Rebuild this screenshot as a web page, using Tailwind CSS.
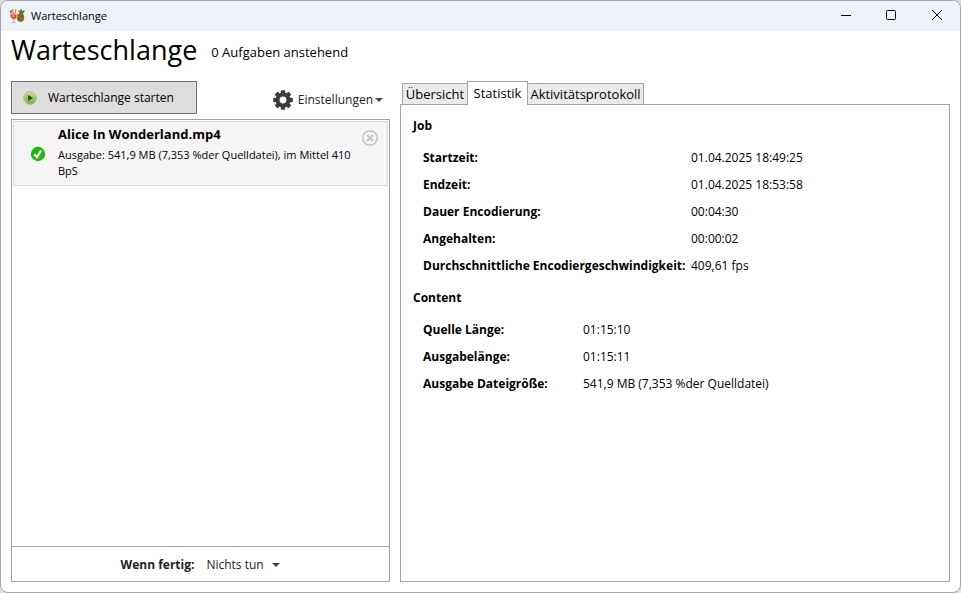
<!DOCTYPE html>
<html lang="de">
<head>
	<meta charset="utf-8">
	<title>Warteschlange</title>
	<script src="https://cdn.jsdelivr.net/npm/@tailwindcss/browser@4"></script>
</head>
<body class="h-screen bg-[#dcdcdc] text-black text-xs leading-4 font-['Open_Sans','Noto_Sans',sans-serif]">
	<div class="h-full flex flex-col bg-white border border-[#a6a6a6] rounded-lg overflow-hidden">
		<!-- Title bar -->
		<header class="h-[30px] shrink-0 flex items-center bg-[#eef3fa] pl-2">
			<svg class="w-4 h-4 mr-1.5" viewBox="0 0 16 16">
				<path d="M1 5.500h7L7 10.500Q4.500 12 2 10z" fill="#e2503f"/>
				<path d="M3.500 1l1 5M7 1L6 6" stroke="#d9604e" stroke-width="1"/>
				<path d="M4.500 11v3M3 14.500h4" stroke="#a9b4bb" stroke-width="1"/>
				<path d="M1 6h7M3 8h2" stroke="#f3c0b4" stroke-width="1"/>
				<circle cx="2" cy="3.500" r="1.500" fill="#77a06a"/>
				<path d="M11 6L9 2l2 1 1-3 1 3 3-1-2 4z" fill="#3f7d31"/>
				<ellipse cx="11.500" cy="9.500" rx="3.800" ry="4.500" fill="#9a7420"/>
				<path d="M9 7l5 5M8.500 10l3.500 3.500M14 7l-5 5M11 6l4 4" stroke="#5d4c17" stroke-width=".6"/>
			</svg>
			<span class="text-[11px]">Warteschlange</span>
			<div class="ml-auto flex h-full">
				<button type="button" aria-label="Minimieren" class="w-[45px] flex items-center justify-center">
					<svg class="w-3 h-3" viewBox="0 0 12 12" fill="none" stroke="#000"><path d="M1 5.500h10"/></svg>
				</button>
				<button type="button" aria-label="Maximieren" class="w-[45px] flex items-center justify-center">
					<svg class="w-3 h-3" viewBox="0 0 12 12" fill="none" stroke="#000"><rect x="1.500" y=".5" width="9" height="9" rx="1"/></svg>
				</button>
				<button type="button" aria-label="Schließen" class="w-[47px] flex items-center justify-center">
					<svg class="w-3 h-3" viewBox="0 0 12 12" fill="none" stroke="#000"><path d="M1 0l10 10M11 0L1 10"/></svg>
				</button>
			</div>
		</header>

		<div class="h-[42px] shrink-0 flex items-center gap-3.5 pl-2.5 pb-1">
			<h1 class="text-[27px] leading-9">Warteschlange</h1>
			<p class="text-[13px] pt-1">0 Aufgaben anstehend</p>
		</div>

		<main class="grow min-h-0 grid grid-cols-[379px_1fr] gap-2.5 px-2.5 pb-2.5 pt-2">
			<!-- Queue -->
			<section class="flex flex-col min-h-0">
				<div class="flex items-start justify-between mb-[5px]">
					<button type="button" class="w-[186px] h-[33px] flex items-center bg-[#dddddd] border border-[#707070] pl-[11px]">
						<svg class="w-3.5 h-3.5 mr-[11px]" viewBox="0 0 14 14">
							<defs>
								<linearGradient id="play" x1="0" y1="0" x2="0" y2="1">
									<stop offset="0" stop-color="#c3dba0"/>
									<stop offset="1" stop-color="#7fb03f"/>
								</linearGradient>
							</defs>
							<circle cx="7" cy="7" r="6.500" fill="url(#play)" stroke="#a9c388" stroke-width=".7"/>
							<path d="M5 4l5 3-5 3z" fill="#33481d"/>
						</svg>
						Warteschlange starten
					</button>
					<button type="button" class="flex items-center mt-[9px] mr-[7px] text-[#222]">
						<svg class="w-5 h-5 mr-[5px]" viewBox="0 0 20 20">
							<g fill="#3c3c3c">
								<rect id="tooth" x="7.800" y="0.200" width="4.400" height="19.600" rx="1"/>
								<use href="#tooth" transform="rotate(45 10 10)"/>
								<use href="#tooth" transform="rotate(90 10 10)"/>
								<use href="#tooth" transform="rotate(135 10 10)"/>
								<circle cx="10" cy="10" r="7.500"/>
							</g>
							<circle cx="10" cy="10" r="3.400" fill="#fff"/>
						</svg>
						Einstellungen
						<svg class="w-2 h-1 ml-0.5" viewBox="0 0 8 4"><path d="M0 0h8L4 4z" fill="#444"/></svg>
					</button>
				</div>
				<div class="grow min-h-0 flex flex-col border border-[#a3a3a3]">
					<ul class="grow p-px">
						<li class="flex items-start h-[65px] bg-[#f5f5f5] border border-[#dadada] pl-4 pr-2">
							<svg class="shrink-0 w-4 h-4 mt-6 mr-3" viewBox="0 0 16 16">
								<circle cx="8" cy="8" r="7.200" fill="#22b80f"/>
								<path d="M4.300 8.200l2.700 3L11 4.500" fill="none" stroke="#fff" stroke-width="2.200"/>
							</svg>
							<div class="grow pt-1">
								<h2 class="text-[13px] leading-4 font-bold">Alice In Wonderland.mp4</h2>
								<p class="text-[11px] leading-4 mt-[5px]">Ausgabe: 541,9 MB (7,353 %der Quelldatei), im Mittel 410 BpS</p>
							</div>
							<button type="button" aria-label="Entfernen" class="shrink-0 mt-[7px]">
								<svg class="w-[18px] h-[18px]" viewBox="0 0 18 18" fill="none" stroke="#c8c8c8">
									<circle cx="9" cy="9" r="7.200" stroke-width="1.700"/>
									<path d="M6 6l6 6M12 6l-6 6" stroke-width="2"/>
								</svg>
							</button>
						</li>
					</ul>
					<div class="h-[35px] shrink-0 flex items-center justify-center pt-0.5 border-t border-[#a3a3a3]">
						<label for="done" class="font-bold text-[#222] mr-3">Wenn fertig:</label>
						<div class="relative flex items-center">
							<select id="done" class="appearance-none pr-4 text-[#222]">
								<option>Nichts tun</option>
							</select>
							<svg class="absolute right-0 w-2 h-1 pointer-events-none" viewBox="0 0 8 4"><path d="M0 0h8L4 4z" fill="#444"/></svg>
						</div>
					</div>
				</div>
			</section>

			<!-- Details -->
			<section class="flex flex-col min-h-0 min-w-0">
				<div role="tablist" class="flex items-end h-[23px] pl-0.5 shrink-0 text-[13px] leading-4">
					<button type="button" role="tab" class="h-[21px] w-[65px] border border-b-0 border-r-0 border-[#a3a3a3] bg-[#ebebeb]">Übersicht</button>
					<button type="button" role="tab" aria-selected="true" class="relative z-10 h-6 w-[61px] -mb-px shrink-0 border border-b-0 border-[#a3a3a3] bg-white pb-0.5">Statistik</button>
					<button type="button" role="tab" class="h-[21px] w-[116px] border border-b-0 border-l-0 border-[#a3a3a3] bg-[#ebebeb]">Aktivitätsprotokoll</button>
				</div>
				<div role="tabpanel" class="grow min-h-0 border border-[#a3a3a3] px-3 pt-[13px]">
					<h2 class="font-bold mb-2.5">Job</h2>
					<table class="ml-2.5 mb-[11px]">
						<tr class="h-[27px]"><th class="text-left p-0 w-[268px]">Startzeit:</th><td class="p-0">01.04.2025 18:49:25</td></tr>
						<tr class="h-[27px]"><th class="text-left p-0">Endzeit:</th><td class="p-0">01.04.2025 18:53:58</td></tr>
						<tr class="h-[27px]"><th class="text-left p-0">Dauer Encodierung:</th><td class="p-0">00:04:30</td></tr>
						<tr class="h-[27px]"><th class="text-left p-0">Angehalten:</th><td class="p-0">00:00:02</td></tr>
						<tr class="h-[27px]"><th class="text-left p-0 whitespace-nowrap">Durchschnittliche Encodiergeschwindigkeit:</th><td class="p-0">409,61 fps</td></tr>
					</table>
					<h2 class="font-bold mb-2.5">Content</h2>
					<table class="ml-2.5">
						<tr class="h-[27px]"><th class="text-left p-0 w-40">Quelle Länge:</th><td class="p-0">01:15:10</td></tr>
						<tr class="h-[27px]"><th class="text-left p-0">Ausgabelänge:</th><td class="p-0">01:15:11</td></tr>
						<tr class="h-[27px]"><th class="text-left p-0">Ausgabe Dateigröße:</th><td class="p-0">541,9 MB (7,353 %der Quelldatei)</td></tr>
					</table>
				</div>
			</section>
		</main>
	</div>
</body>
</html>
